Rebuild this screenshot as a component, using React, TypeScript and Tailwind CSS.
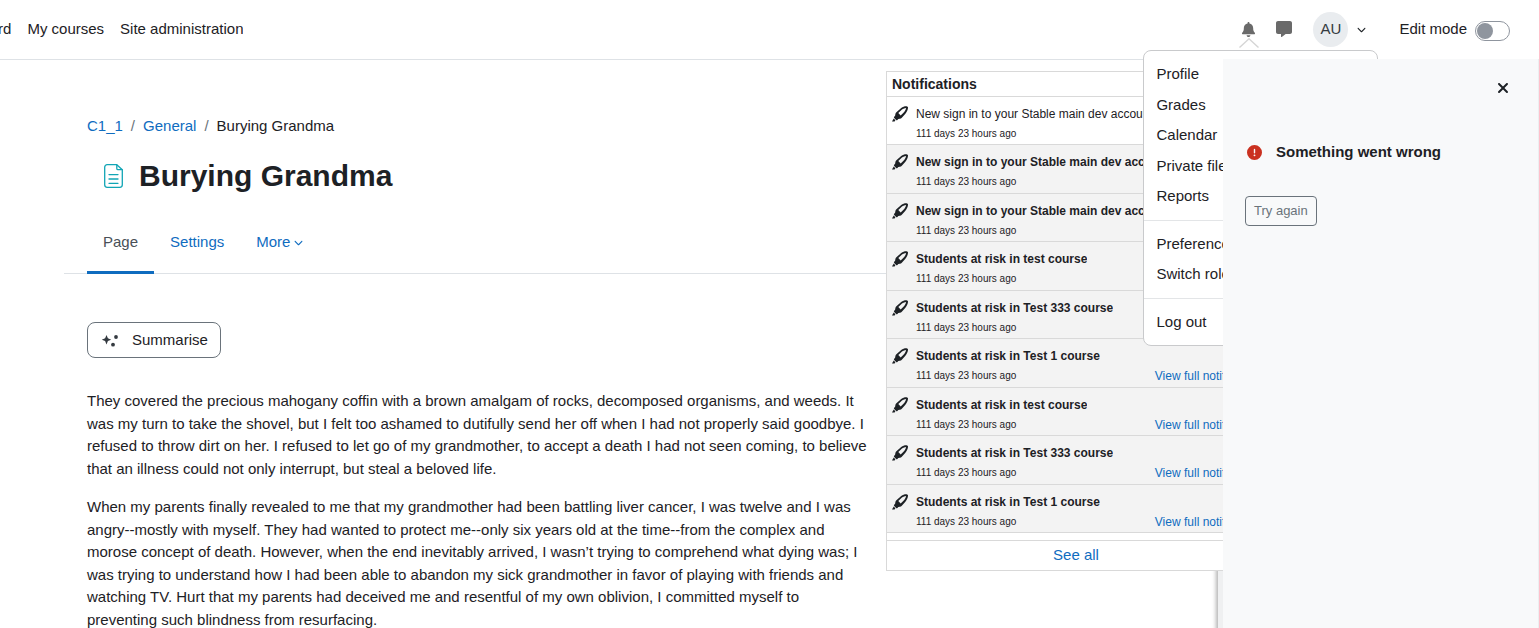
import React from "react";
import { FaBell, FaMessage, FaChevronDown, FaXmark, FaCircleExclamation } from "react-icons/fa6";

const notifications = [
  { id: 1, title: "New sign in to your Stable main dev account", read: true },
  { id: 2, title: "New sign in to your Stable main dev account", read: false },
  { id: 3, title: "New sign in to your Stable main dev account", read: false },
  { id: 4, title: "Students at risk in test course", read: false },
  { id: 5, title: "Students at risk in Test 333 course", read: false },
  { id: 6, title: "Students at risk in Test 1 course", read: false },
  { id: 7, title: "Students at risk in test course", read: false },
  { id: 8, title: "Students at risk in Test 333 course", read: false },
  { id: 9, title: "Students at risk in Test 1 course", read: false },
];

// Each group is separated by a divider
const menuGroups = [
  ["Profile", "Grades", "Calendar", "Private files", "Reports"],
  ["Preferences", "Switch role to..."],
  ["Log out"],
];

const paragraphs = [
  "They covered the precious mahogany coffin with a brown amalgam of rocks, decomposed organisms, and weeds. It was my turn to take the shovel, but I felt too ashamed to dutifully send her off when I had not properly said goodbye. I refused to throw dirt on her. I refused to let go of my grandmother, to accept a death I had not seen coming, to believe that an illness could not only interrupt, but steal a beloved life.",
  "When my parents finally revealed to me that my grandmother had been battling liver cancer, I was twelve and I was angry--mostly with myself. They had wanted to protect me--only six years old at the time--from the complex and morose concept of death. However, when the end inevitably arrived, I wasn’t trying to comprehend what dying was; I was trying to understand how I had been able to abandon my sick grandmother in favor of playing with friends and watching TV. Hurt that my parents had deceived me and resentful of my own oblivion, I committed myself to preventing such blindness from resurfacing.",
];

const MarkerIcon = () => {
  return (
    <svg className="mt-1 size-4 shrink-0" viewBox="0 0 16 16" fill="currentColor">
      <path
        fillRule="evenodd"
        d="M9.200 1.900C11 .6 13 0 14.600.2c1 .1 1.500.8 1.400 1.800-.2 2-1.200 4-2.800 5.900L9.800 11.800c-.5.600-1.100.9-1.900 1l-1.600.2-.9.900c-.4.400-.9.400-1.300 0L2.200 12c-.4-.4-.4-.9 0-1.300l.9-.9.300-1.700c.1-.7.500-1.300 1-1.800zM10 3.400 6.300 7.100l2.400 2.500 3.500-3.600c1-1.200 1.700-2.600 1.900-4-1.400.1-2.800.5-4.100 1.400z"
      />
      <path d="M1.700 12.600 3.400 14.300 2.600 15.600H0z" />
    </svg>
  );
};

const NotificationsPopover = () => {
  return (
    <div className="absolute right-[273px] top-[71px] z-10 flex h-[500px] w-[380px] flex-col border border-[#d9d9d9] bg-white">
      <h3 className="border-b border-[#d9d9d9] px-[5px] text-sm font-bold leading-6">Notifications</h3>
      <ul className="grid h-[436px] auto-rows-fr">
        {notifications.map((item) => (
          <li
            key={item.id}
            className={`border-b border-[#d9d9d9] px-[5px] pt-[5px] ${item.read ? "bg-white" : "bg-[#f3f3f3]"}`}
          >
            <div className="flex gap-2">
              <MarkerIcon />
              <div className={`truncate text-xs leading-6 ${item.read ? "" : "font-bold"}`}>{item.title}</div>
            </div>
            <div className="flex justify-between pl-6">
              <span className="text-[10px] leading-4">111 days 23 hours ago</span>
              <a href="#" className="text-xs leading-4 text-[#0f6cbf]">View full notification</a>
            </div>
          </li>
        ))}
      </ul>
      <a href="#" className="mt-auto border-t border-[#d9d9d9] pb-px text-center leading-7 text-[#0f6cbf]">See all</a>
    </div>
  );
};

const UserMenu = () => {
  return (
    <div className="absolute right-0 top-[50px] z-20 w-[235px] divide-y divide-[#e3e5e7] rounded-lg border border-[#c9cacc] bg-white text-[#1d2125]">
      {menuGroups.map((group) => (
        <div key={group[0]} className="py-2">
          {group.map((label) => (
            <a key={label} href="#" className="block px-3 py-1">{label}</a>
          ))}
        </div>
      ))}
    </div>
  );
};

const Header = () => {
  return (
    <header className="flex h-[60px] items-stretch justify-between border-b border-[#dee2e6]">
      <nav className="flex items-center gap-4 overflow-hidden">
        <a href="#" className="-ml-[62px]">Dashboard</a>
        <a href="#">My courses</a>
        <a href="#">Site administration</a>
      </nav>
      <div className="flex items-stretch pr-[29px]">
        <button aria-label="Notifications" className="relative flex w-[35px] items-center justify-center pb-px text-[#6a6a6a]">
          <FaBell className="size-[15px]" />
          <svg className="absolute bottom-[11px] left-2 h-[10px] w-5" viewBox="0 0 20 10" fill="none" stroke="#d5d5d5" strokeWidth="1.4">
            <path d="M.5 9.500 10 .8l9.500 8.700" />
          </svg>
        </button>
        <button aria-label="Messages" className="flex w-[35px] items-center justify-center pb-px text-[#6a6a6a]">
          <FaMessage className="size-4" />
        </button>
        <div className="relative ml-3 flex items-center pr-3">
          <button aria-label="User menu" className="flex items-center gap-[9px]">
            <span className="flex size-[35px] items-center justify-center rounded-full bg-[#e9ecef] text-[#343a40]">AU</span>
            <FaChevronDown className="size-[9px]" />
          </button>
          <UserMenu />
        </div>
        <label className="ml-[21px] flex items-center gap-2">
          Edit mode
          <input
            type="checkbox"
            role="switch"
            className="mt-0.5 flex h-5 w-[35px] appearance-none items-center rounded-full border border-[#8f959e] bg-white px-px before:size-4 before:rounded-full before:bg-[#8f959e]"
          />
        </label>
      </div>
    </header>
  );
};

const ErrorDrawer = () => {
  return (
    <aside className="-mt-px w-[321px] shrink-0 bg-[#eff0f1] pl-[5px] shadow-[-2px_8px_4px_rgba(0,0,0,0.3)]">
      <div className="relative z-30 h-full border-r border-[#eceef0] bg-[#f8f9fa] px-[22px] pt-5">
        <div className="flex justify-end">
          <button aria-label="Close" className="mr-1 p-px">
            <FaXmark className="size-4" />
          </button>
        </div>
        <div className="mt-11 flex items-center gap-[14px]">
          <FaCircleExclamation className="ml-[2px] size-[15px] text-[#ca3120]" />
          <h2 className="font-bold">Something went wrong</h2>
        </div>
        <button className="mt-8 rounded-sm border border-[#6a737b] px-2 py-1 text-[13px] leading-5 text-[#6a737b]">
          Try again
        </button>
      </div>
    </aside>
  );
};

const PageContent = () => {
  return (
    <main className="ml-16 max-w-[830px] flex-1 pt-[55px]">
      <div className="px-[23px]">
        <nav aria-label="Breadcrumb" className="flex gap-2">
          <a href="#" className="text-[#0f6cbf]">C1_1</a>
          <span className="text-[#6a737b]">/</span>
          <a href="#" className="text-[#0f6cbf]">General</a>
          <span className="text-[#6a737b]">/</span>
          <span>Burying Grandma</span>
        </nav>
        <div className="mt-5 flex items-center gap-[14px] pl-[14px]">
          <svg className="size-6" viewBox="0 0 24 24" fill="none" stroke="#11a5b5" strokeWidth="1.300" strokeLinecap="round" strokeLinejoin="round">
            <path d="M15.800.7H6.200a2.500 2.500 0 0 0-2.500 2.500v17.600a2.500 2.500 0 0 0 2.500 2.500h12.600a2.500 2.500 0 0 0 2.500-2.500V5.700z" />
            <path d="M15.800.9v3.600c0 .7.500 1.200 1.200 1.200h4.100M8 10.600h9M8 15h9M8 19.300h9" />
          </svg>
          <h1 className="text-[30px] font-bold leading-9">Burying Grandma</h1>
        </div>
      </div>
      <nav className="mt-4 flex border-b border-[#dee2e6] px-[23px]">
        <a href="#" aria-current="page" className="-mb-px border-b-[3px] border-[#0f6cbf] px-4 pb-[18px] pt-[21px] text-[#495057]">Page</a>
        <a href="#" className="px-4 pb-5 pt-[21px] text-[#0f6cbf]">Settings</a>
        <button className="flex items-center gap-1 px-4 pb-5 pt-[21px] text-[#0f6cbf]">
          More
          <FaChevronDown className="mt-px size-[9px]" />
        </button>
      </nav>
      <div className="px-[23px] pt-12">
        <button className="flex h-9 items-center gap-3 rounded-lg border border-[#6a737b] px-3">
          <svg className="size-5" viewBox="0 0 20 20" fill="#343a40">
            <path d="M6.500 5 7.900 8.300l3.300 1.400-3.300 1.400-1.400 3.400-1.400-3.400L1.800 9.700l3.300-1.400z" />
            <circle cx="16" cy="7" r="1.900" />
            <circle cx="13" cy="14.700" r="1.900" />
          </svg>
          Summarise
        </button>
        <div className="mt-8 space-y-4">
          {paragraphs.map((text) => (
            <p key={text}>{text}</p>
          ))}
        </div>
      </div>
    </main>
  );
};

const App = () => {
  return (
    <div className="relative flex min-h-screen flex-col overflow-hidden bg-white font-['Liberation_Sans',Arial,sans-serif] text-[15px] leading-normal text-[#1d2125]">
      <Header />
      <NotificationsPopover />
      <div className="flex flex-1 justify-between">
        <PageContent />
        <ErrorDrawer />
      </div>
    </div>
  );
};

export default App;
